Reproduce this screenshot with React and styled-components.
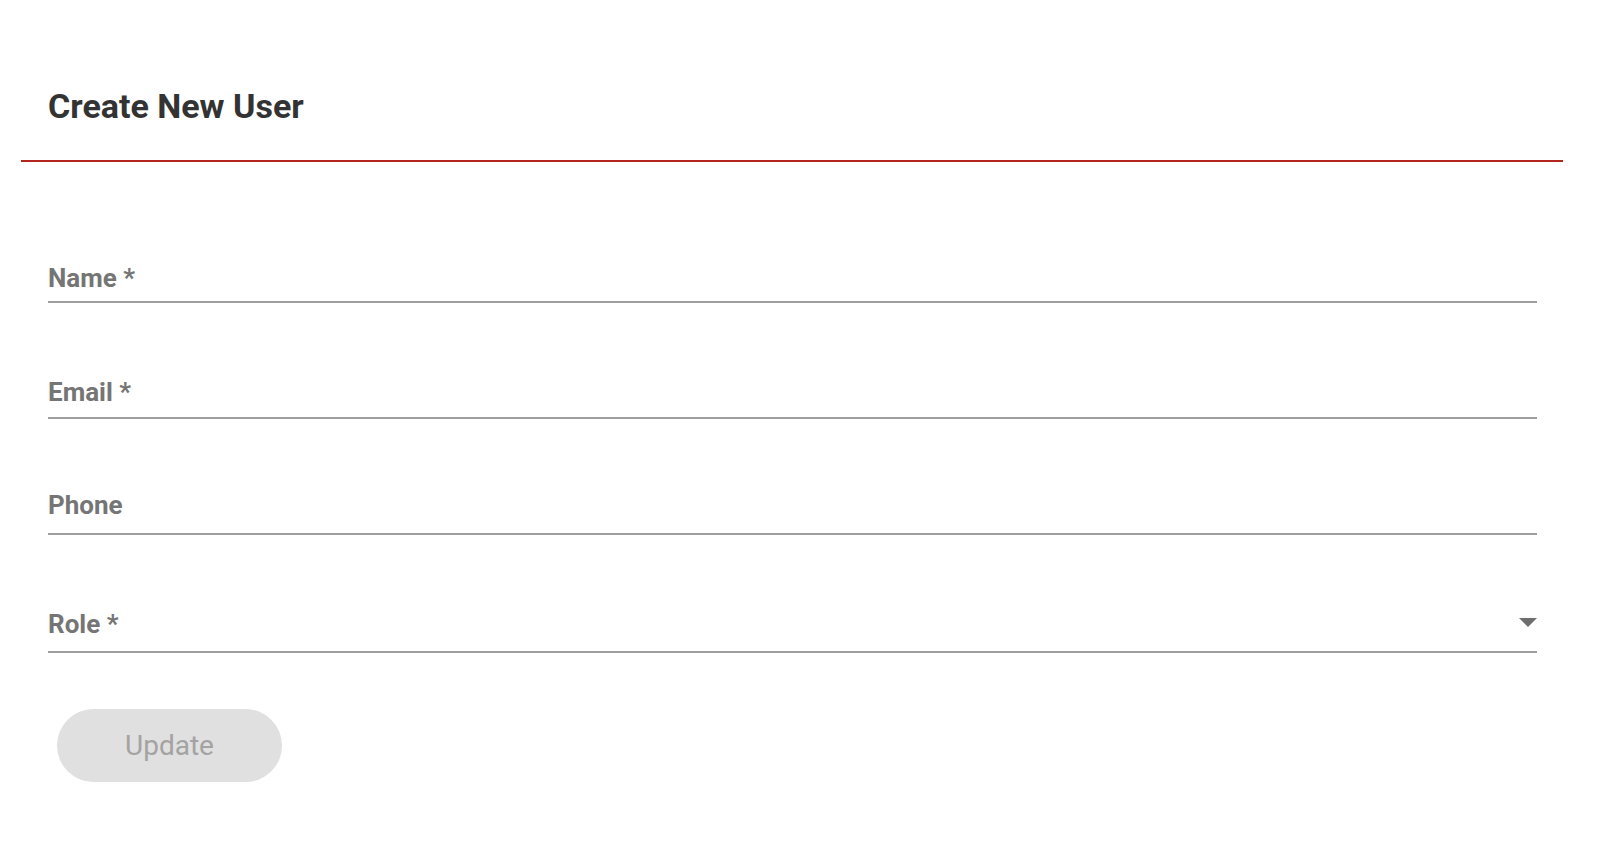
import React from "react";
import styled, { createGlobalStyle } from "styled-components";

const GlobalStyle = createGlobalStyle`
  html, body {
    margin: 0;
    padding: 0;
    background: #ffffff;
    font-family: Roboto, "Liberation Sans", sans-serif;
  }
`;

const Page = styled.div`
  padding: 0 37px 0 21px;
`;

const Header = styled.div`
  padding: 86px 27px 34px;
  border-bottom: 2px solid #b3261e;
`;

const Title = styled.h1`
  margin: 0;
  font-size: 34px;
  line-height: 40px;
  font-weight: 700;
  color: #333333;
`;

const Form = styled.form`
  display: flex;
  flex-direction: column;
  padding: 0 26px 0 27px;
`;

const Field = styled.div`
  display: flex;
  align-items: flex-end;
  justify-content: space-between;
  margin-top: ${(p) => p.$gap}px;
  padding-bottom: ${(p) => p.$pad}px;
  border-bottom: 2px solid #9e9e9e;
`;

const Label = styled.label`
  font-size: 26px;
  line-height: 26px;
  font-weight: 700;
  color: #757575;
`;

const Arrow = styled.span`
  width: 0;
  height: 0;
  margin-bottom: 10px;
  border-left: 9px solid transparent;
  border-right: 9px solid transparent;
  border-top: 9px solid #6e6e6e;
`;

const Button = styled.button`
  align-self: flex-start;
  margin: 56px 0 0 9px;
  width: 225px;
  height: 73px;
  border: none;
  border-radius: 37px;
  background: #e0e0e0;
  color: #a3a3a3;
  font-family: Roboto, "Liberation Sans", sans-serif;
  font-size: 28px;
  font-weight: 400;
`;

function App() {
  return (
    <>
      <GlobalStyle />
      <Page>
        <Header>
          <Title>Create New User</Title>
        </Header>
        <Form>
          <Field $gap={103} $pad={10}>
            <Label>Name *</Label>
          </Field>
          <Field $gap={76} $pad={12}>
            <Label>Email *</Label>
          </Field>
          <Field $gap={73} $pad={15}>
            <Label>Phone</Label>
          </Field>
          <Field $gap={76} $pad={14}>
            <Label>Role *</Label>
            <Arrow />
          </Field>
          <Button type="button" disabled>
            Update
          </Button>
        </Form>
      </Page>
    </>
  );
}

export default App;
